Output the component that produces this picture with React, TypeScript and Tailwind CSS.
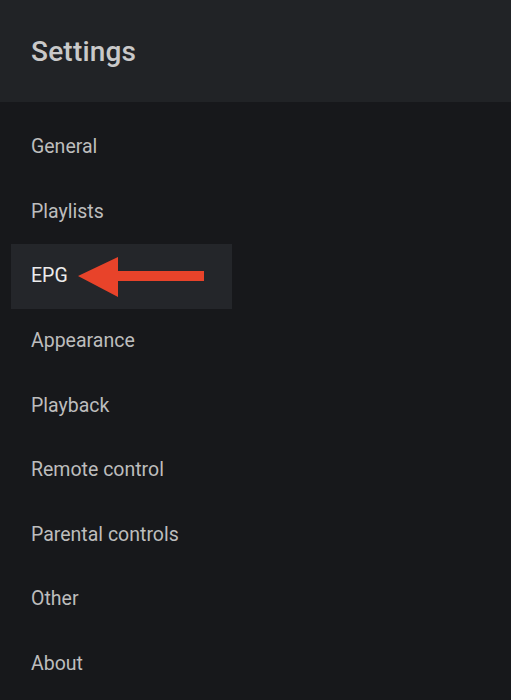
const items = [
  "General",
  "Playlists",
  "EPG",
  "Appearance",
  "Playback",
  "Remote control",
  "Parental controls",
  "Other",
  "About",
];

export default function App() {
  return (
    <div className="w-[511px] h-[700px] overflow-hidden bg-[#17181b] font-['Roboto',sans-serif]">
      <header className="h-[102px] bg-[#212326] flex items-center px-[31px]">
        <h1 className="text-[28px] font-medium text-[#c9c9c9] tracking-[0.2px] mt-[2px]">Settings</h1>
      </header>
      <ul className="pt-[12.5px]">
        {items.map((label) => {
          const active = label === "EPG";
          return (
            <li
              key={label}
              className={
                active
                  ? "relative h-[65px] w-[221px] ml-[11px] bg-[#24262a] flex items-center pl-[20px] text-[19.5px] text-[#ececec]"
                  : "h-[64.5px] flex items-center pl-[31px] text-[19.5px] text-[#bdbdbd]"
              }
            >
              {label}
              {active && (
                <svg
                  className="absolute left-[67px] top-[12px]"
                  width="128"
                  height="42"
                  viewBox="0 0 128 42"
                >
                  <polygon points="0,20 40,1 40,15 126,15 126,25 40,25 40,41" fill="#e8432a" />
                </svg>
              )}
            </li>
          );
        })}
      </ul>
    </div>
  );
}
